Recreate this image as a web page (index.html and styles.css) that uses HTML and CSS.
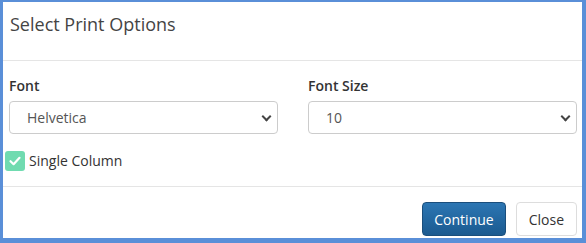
FILE: index.html
```html
<!DOCTYPE html>
<html lang="en">
<head>
    <meta charset="UTF-8">
    <title>Select Print Options</title>
    <link rel="stylesheet" href="styles.css">
</head>
<body>

<div class="modal">
    <div class="modal-header">
        <h4 class="modal-title">Select Print Options</h4>
    </div>

    <div class="modal-body">
        <div class="row">
            <div class="field">
                <label for="font">Font</label>
                <div class="select-wrap">
                    <select id="font">
                        <option>Helvetica</option>
                        <option>Times</option>
                        <option>Courier</option>
                    </select>
                </div>
            </div>
            <div class="field">
                <label for="fontSize">Font Size</label>
                <div class="select-wrap">
                    <select id="fontSize">
                        <option>10</option>
                        <option>12</option>
                        <option>14</option>
                    </select>
                </div>
            </div>
        </div>

        <label class="check">
            <span class="check-box">
                <svg width="14" height="14" viewBox="0 0 14 14"><path d="M2.5 7.2 L5.6 10.2 L11.5 3.8" fill="none" stroke="#fff" stroke-width="2.2" stroke-linecap="round" stroke-linejoin="round"/></svg>
            </span>
            Single Column
        </label>
    </div>

    <div class="modal-footer">
        <button type="button" class="btn btn-primary">Continue</button>
        <button type="button" class="btn btn-default">Close</button>
    </div>
</div>

</body>
</html>
```

FILE: styles.css
```css
body {
    margin: 0;
    font-family: 'Open Sans', sans-serif;
    font-size: 14px;
    color: #333;
    background-color: #fff;
}

.modal {
    width: 586px;
    height: 243px;
    box-sizing: border-box;
    border-style: solid;
    border-color: #5a8fd8;
    border-width: 2px 4px 5px 3px;
    background-color: #fff;
    display: flex;
    flex-direction: column;
}

.modal-header {
    height: 59px;
    box-sizing: border-box;
    padding: 10px 7px 0;
    border-bottom: 1px solid #e5e5e5;
}

.modal-title {
    margin: 0;
    font-size: 18px;
    font-weight: 400;
    line-height: 25px;
    color: #444;
}

.modal-body {
    padding: 15px 5px 0 6px;
    height: 126px;
    box-sizing: border-box;
    border-bottom: 1px solid #e5e5e5;
}

.row {
    display: flex;
    gap: 30px;
}

.field {
    flex: 1;
}

.field label {
    display: block;
    font-weight: 600;
    line-height: 20px;
    margin-bottom: 5px;
    color: #333;
}

.select-wrap {
    position: relative;
}

.select-wrap::after {
    content: "";
    position: absolute;
    right: 8px;
    top: 12px;
    width: 5px;
    height: 5px;
    border-right: 2px solid #444;
    border-bottom: 2px solid #444;
    transform: rotate(45deg);
    pointer-events: none;
}

select {
    width: 100%;
    height: 33px;
    box-sizing: border-box;
    padding: 0 0 0 17px;
    font-family: 'Open Sans', sans-serif;
    font-size: 14px;
    color: #555;
    background-color: #fff;
    border: 1px solid #ccc;
    border-radius: 4px;
    appearance: none;
    -webkit-appearance: none;
}

.check {
    display: flex;
    align-items: center;
    gap: 4px;
    margin-top: 17px;
    margin-left: -4px;
    line-height: 20px;
    color: #333;
}

.check-box {
    width: 20px;
    height: 20px;
    border-radius: 3px;
    background-color: #70dbb0;
    display: flex;
    align-items: center;
    justify-content: center;
}

.modal-footer {
    flex: 1;
    display: flex;
    justify-content: flex-end;
    gap: 10px;
    padding: 15px 5px 0 0;
}

.btn {
    height: 34px;
    padding: 0 11px;
    font-family: 'Open Sans', sans-serif;
    font-size: 14px;
    border-radius: 4px;
    cursor: pointer;
}

.btn-primary {
    color: #fff;
    background: linear-gradient(#2c76b3, #1b5a90);
    border: 1px solid #1a4e7c;
}

.btn-default {
    color: #333;
    background-color: #fff;
    border: 1px solid #ddd;
    padding: 0 12px;
}
```
